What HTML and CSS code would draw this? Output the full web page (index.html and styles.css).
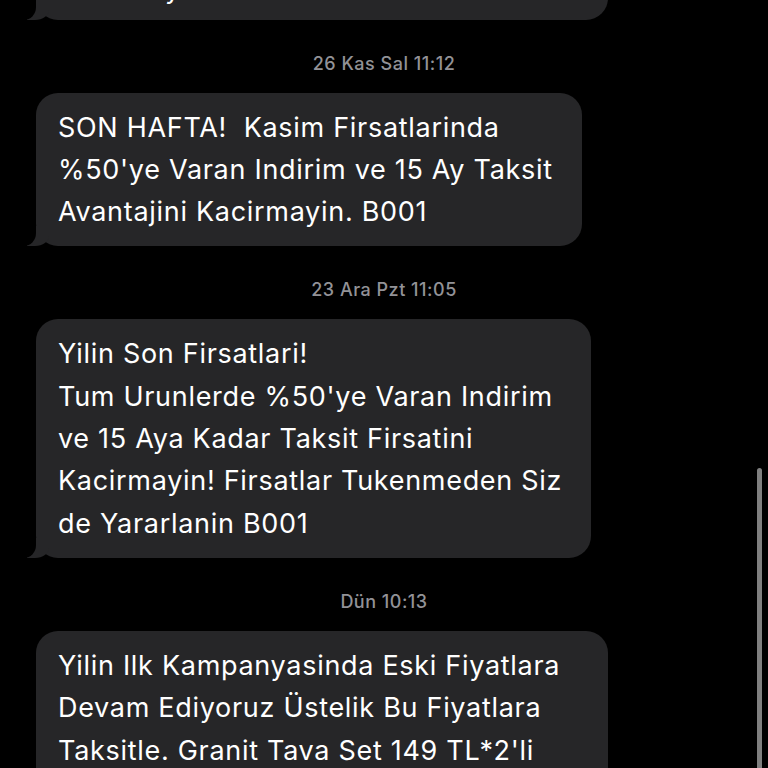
FILE: index.html
```html
<!DOCTYPE html>
<html lang="tr">
<head>
<meta charset="utf-8">
<title>Mesajlar</title>
<link rel="stylesheet" href="styles.css">
</head>
<body>
<div class="thread">
  <div class="bubble bubble-wide bubble-first">
    <div class="line">Firsatlari Kacirmayin. Son Gun</div>
    <div class="line">Kasim Ayi B001</div>
  </div>
  <div class="stamp">26 Kas Sal 11:12</div>
  <div class="bubble">
    <div class="line">SON HAFTA!&nbsp; Kasim Firsatlarinda</div>
    <div class="line">%50'ye Varan Indirim ve 15 Ay Taksit</div>
    <div class="line">Avantajini Kacirmayin. B001</div>
  </div>
  <div class="stamp">23 Ara Pzt 11:05</div>
  <div class="bubble">
    <div class="line">Yilin Son Firsatlari!</div>
    <div class="line">Tum Urunlerde %50'ye Varan Indirim</div>
    <div class="line">ve 15 Aya Kadar Taksit Firsatini</div>
    <div class="line">Kacirmayin! Firsatlar Tukenmeden Siz</div>
    <div class="line">de Yararlanin B001</div>
  </div>
  <div class="stamp">Dün 10:13</div>
  <div class="bubble bubble-wide">
    <div class="line">Yilin Ilk Kampanyasinda Eski Fiyatlara</div>
    <div class="line">Devam Ediyoruz Üstelik Bu Fiyatlara</div>
    <div class="line">Taksitle. Granit Tava Set 149 TL*2'li</div>
    <div class="line">Alana Ikincisi Hediye B001</div>
  </div>
</div>
<div class="scrollbar"></div>
</body>
</html>
```
FILE: styles.css
```css
html, body {
  margin: 0;
  padding: 0;
  background: #000;
  height: 768px;
  overflow: hidden;
}
body {
  position: relative;
  font-family: Inter, "Liberation Sans", Arial, sans-serif;
  color: #fff;
}
.thread {
  display: flex;
  flex-direction: column;
  align-items: flex-start;
  margin-top: -92px;
}
.bubble {
  position: relative;
  margin-left: 36px;
  background: #262628;
  border-radius: 22px;
  padding: 14px 29px 13px 22px;
  font-size: 27px;
  line-height: 42.3px;
  letter-spacing: 0.7px;
  white-space: nowrap;
}
.bubble::before {
  content: "";
  position: absolute;
  left: -9px;
  bottom: 0;
  width: 22px;
  height: 20px;
  background: #262628;
  border-bottom-right-radius: 14px 10px;
}
.bubble::after {
  content: "";
  position: absolute;
  left: -24px;
  bottom: 0;
  width: 24px;
  height: 22px;
  background: #000;
  border-bottom-right-radius: 12px 13px;
}
.bubble-wide {
  width: 521px;
}
.bubble-first {
  padding-top: 18px;
  padding-bottom: 9px;
}
.stamp {
  align-self: center;
  margin: 34px 0 19px;
  font-size: 18px;
  line-height: 20px;
  font-weight: 500;
  color: #929297;
  letter-spacing: 0.5px;
}
.scrollbar {
  position: absolute;
  right: 6px;
  top: 468px;
  width: 5px;
  height: 320px;
  border-radius: 3px;
  background: #7f7f7f;
}
```
